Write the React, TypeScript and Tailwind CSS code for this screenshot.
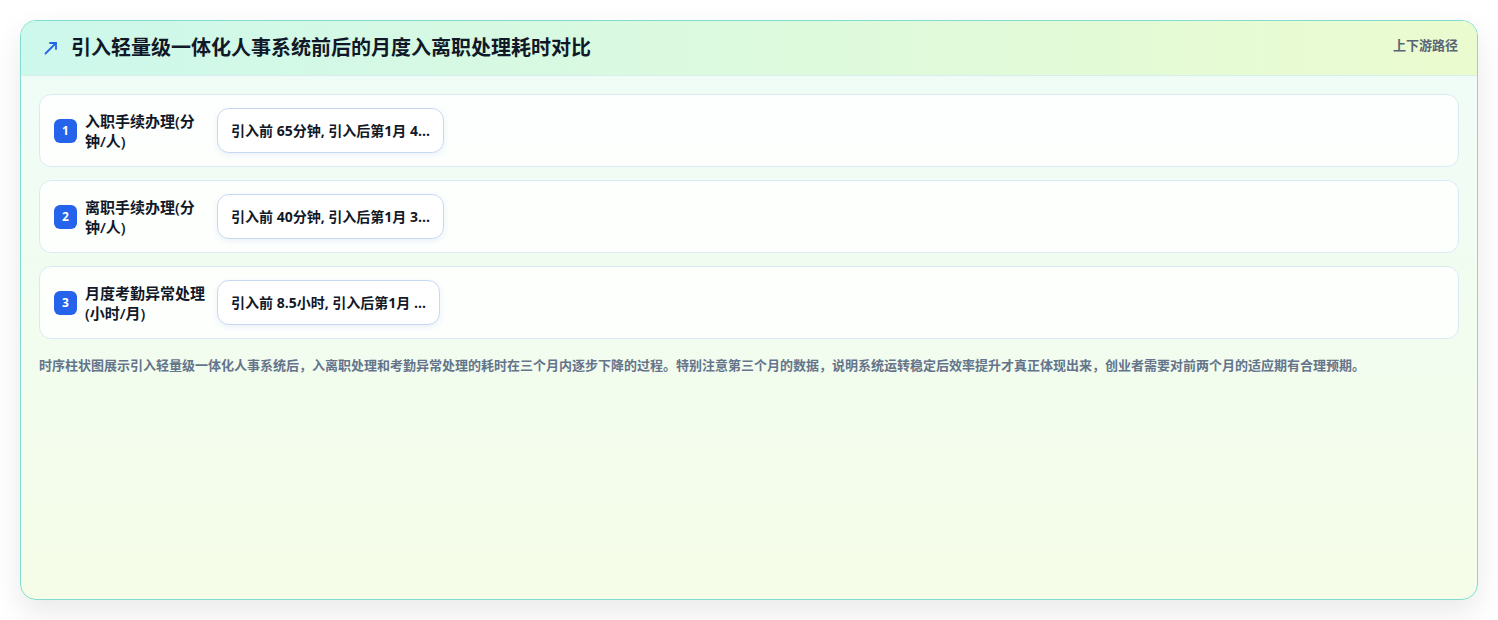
import React from "react";

const rows = [
    {
        label: "入职手续办理(分钟/人)",
        value: "引入前 65分钟, 引入后第1月 48分钟, 第2月 36分钟, 第3月 22分钟",
    },
    {
        label: "离职手续办理(分钟/人)",
        value: "引入前 40分钟, 引入后第1月 32分钟, 第2月 25分钟, 第3月 15分钟",
    },
    {
        label: "月度考勤异常处理(小时/月)",
        value: "引入前 8.5小时, 引入后第1月 6.8小时, 第2月 4.5小时, 第3月 2小时",
    },
];

// 長いテキストは18文字で切る
const clip = (s: string) => (s.length > 18 ? s.slice(0, 18) + "..." : s);

export default function App() {
    return (
        <div
            className="w-full h-[620px] bg-white px-5 pt-5 pb-5"
            style={{ fontFamily: '"Open Sans", "Noto Sans CJK SC", sans-serif' }}
        >
            <div className="h-full flex flex-col rounded-2xl border border-[#7fdccf] overflow-hidden shadow-[0_12px_30px_rgba(0,0,0,0.09)] bg-gradient-to-b from-[#effcf8] to-[#f5fde8]">
                {/* ヘッダー */}
                <div className="flex items-start justify-between h-[55px] pl-[22px] pr-[19px] bg-gradient-to-r from-[#cdf8ec] to-[#ebfbcf] border-b border-[#d6eeee]">
                    <div className="flex items-center gap-3 h-full">
                        <svg width="16" height="16" viewBox="0 0 16 16" fill="none" className="text-[#2563eb]">
                            <path d="M2.5 13.5 L13 3" stroke="currentColor" strokeWidth="1.8" strokeLinecap="round" />
                            <path d="M7 3 H13 V9" stroke="currentColor" strokeWidth="1.8" strokeLinecap="round" strokeLinejoin="round" />
                        </svg>
                        <h1 className="text-[20px] font-bold text-[#111827]">
                            引入轻量级一体化人事系统前后的月度入离职处理耗时对比
                        </h1>
                    </div>
                    <span className="mt-[15px] text-[13px] font-semibold text-[#5b6475]">上下游路径</span>
                </div>

                {/* 本体 */}
                <div className="flex flex-col gap-[13px] px-[18px] pt-[18px]">
                    {rows.map((r, i) => (
                        <div
                            key={i}
                            className="flex items-center h-[73px] px-[14px] rounded-xl border border-[#dbe9f5] bg-white/85"
                        >
                            <span className="flex items-center justify-center w-[23px] h-[24px] rounded-md bg-[#2563eb] text-white text-[12px] font-bold shrink-0">
                                {i + 1}
                            </span>
                            <span className="ml-2 w-[122px] text-[15px] leading-[20px] font-semibold text-[#111827]">
                                {r.label}
                            </span>
                            <span className="ml-[10px] h-[45px] flex items-center px-[13px] rounded-xl border border-[#c7d9f2] bg-white shadow-[0_2px_6px_rgba(30,64,175,0.08)] text-[14px] font-bold text-[#111827] whitespace-nowrap">
                                {clip(r.value)}
                            </span>
                        </div>
                    ))}
                    <p className="mt-[3px] text-[13px] leading-[20px] font-semibold text-[#64748b]">
                        时序柱状图展示引入轻量级一体化人事系统后，入离职处理和考勤异常处理的耗时在三个月内逐步下降的过程。特别注意第三个月的数据，说明系统运转稳定后效率提升才真正体现出来，创业者需要对前两个月的适应期有合理预期。
                    </p>
                </div>
            </div>
        </div>
    );
}
